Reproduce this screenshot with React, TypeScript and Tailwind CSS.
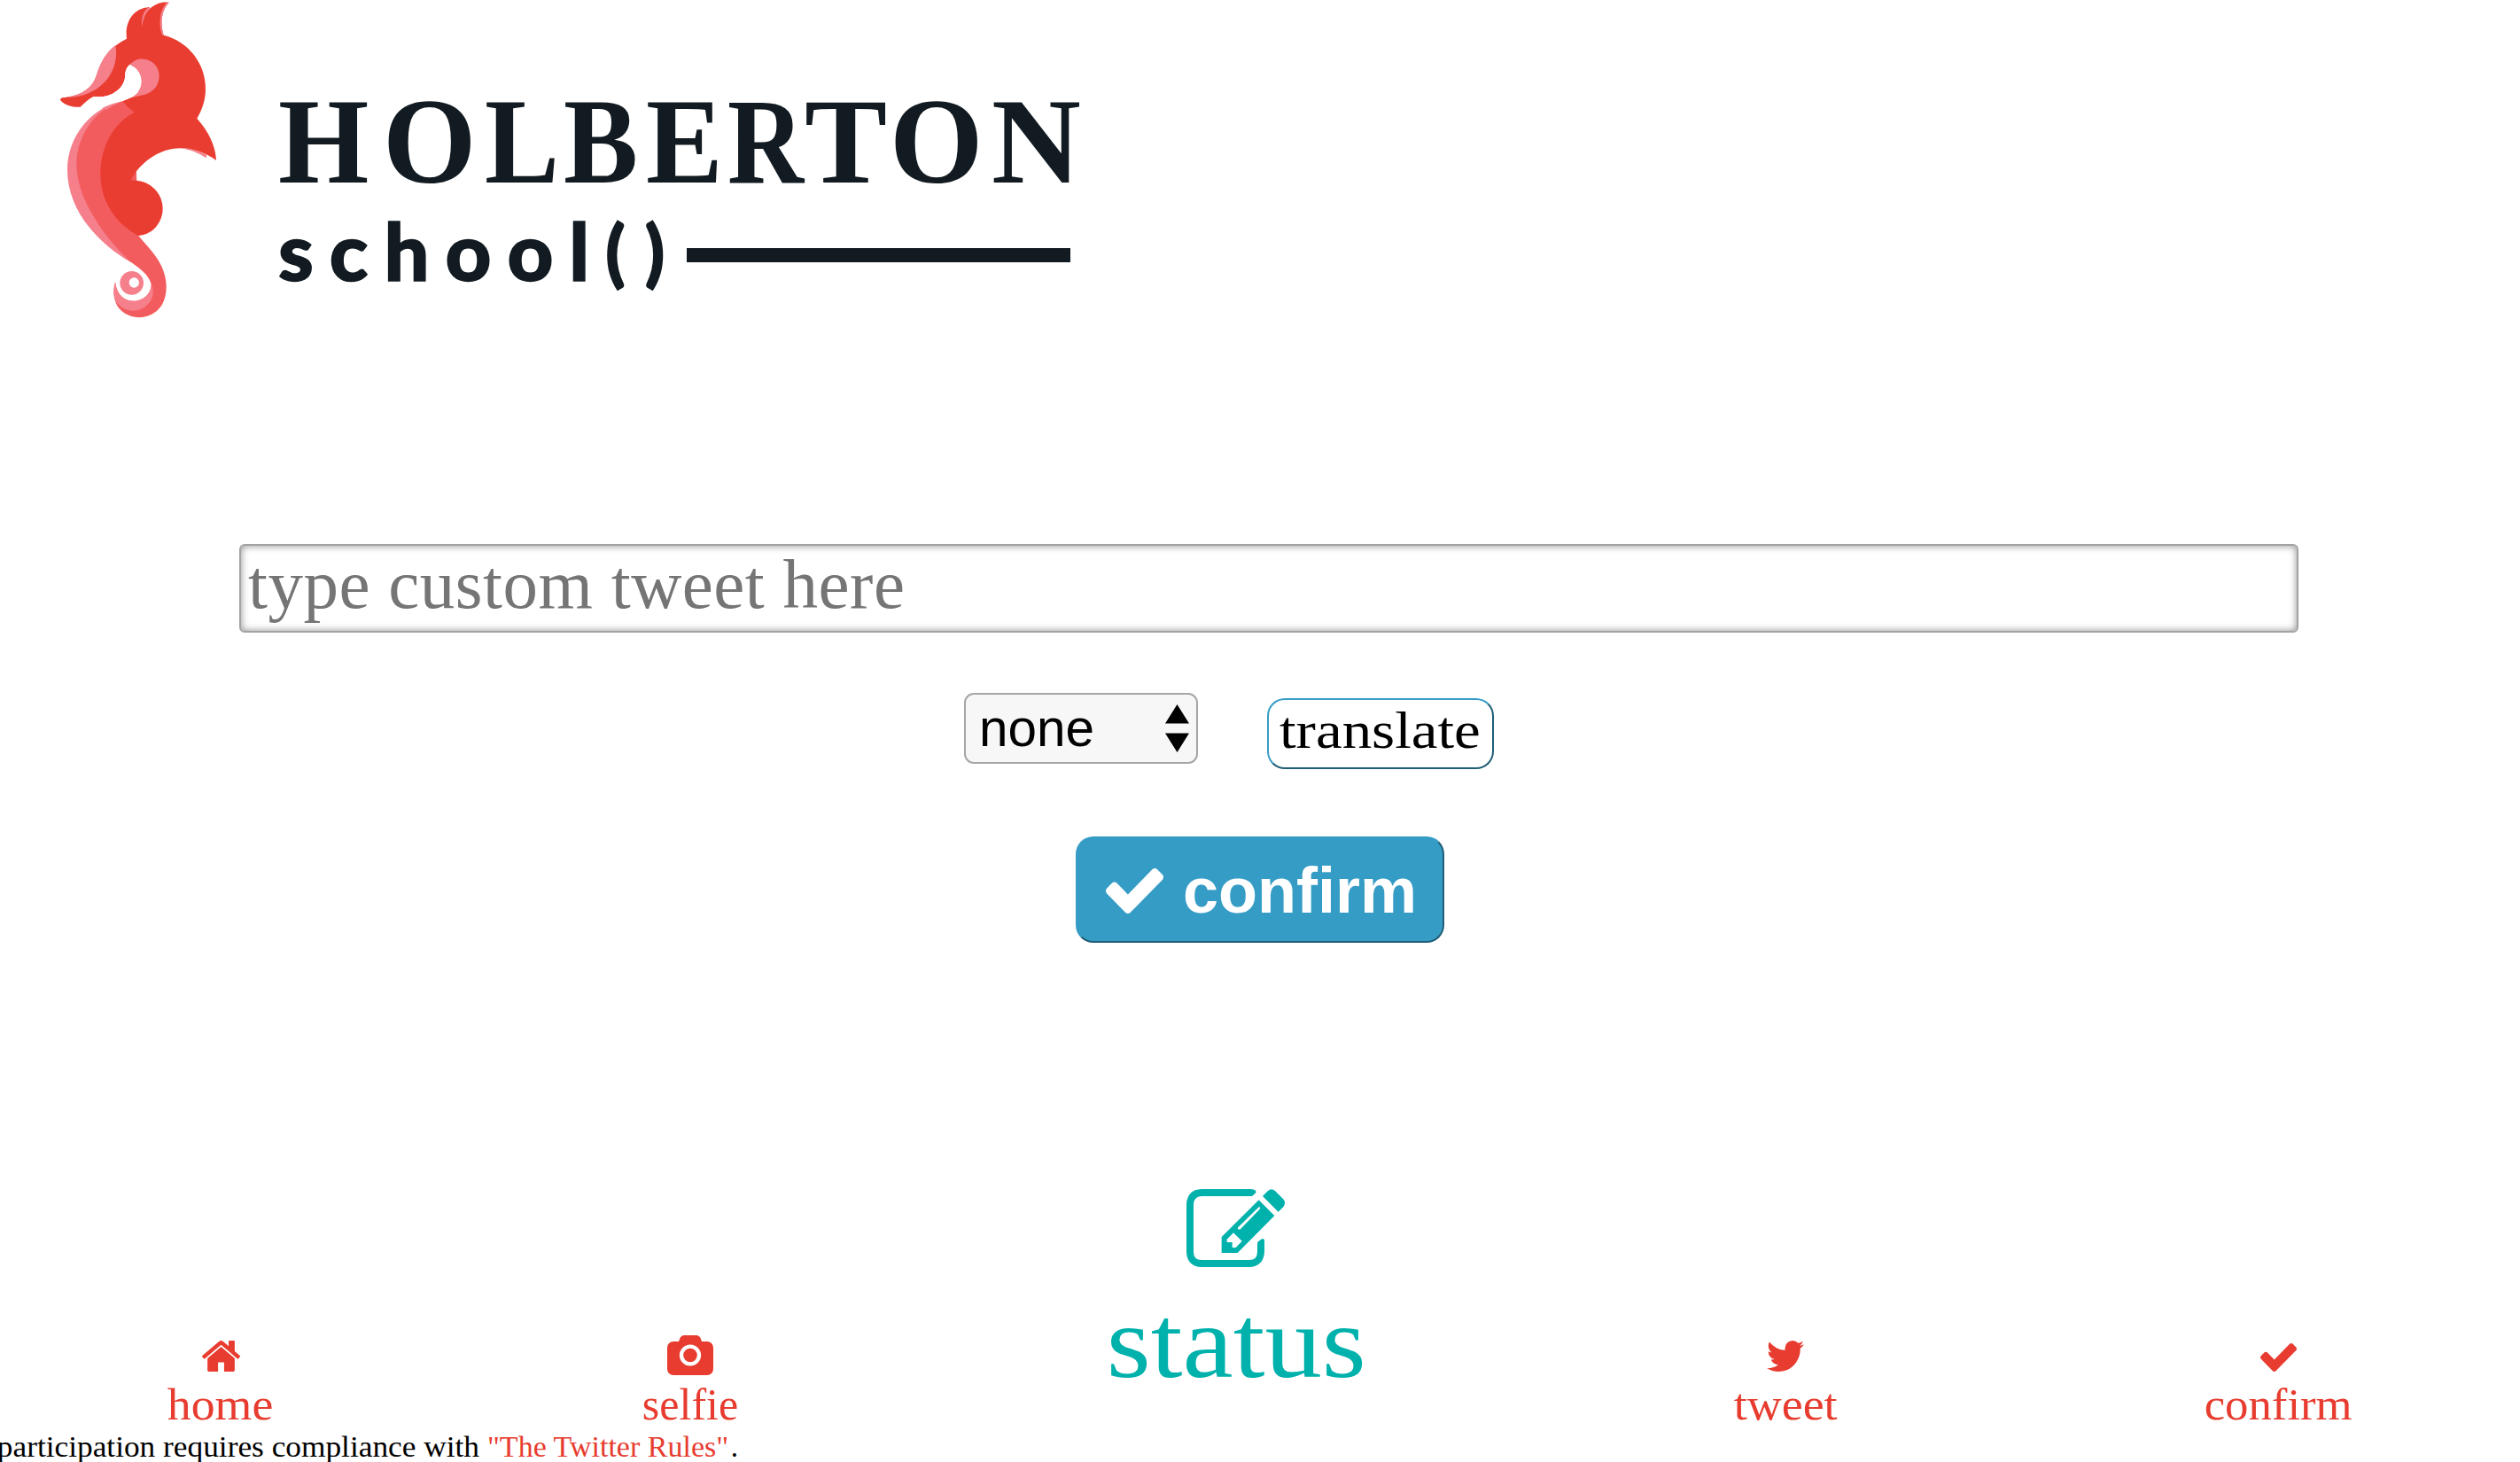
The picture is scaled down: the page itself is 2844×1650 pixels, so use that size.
import React from "react";

const serif = "font-['Palatino','Liberation_Serif',serif]";

function Seahorse() {
  return (
    <svg viewBox="0 0 720 1110" className="h-[370px] w-[240px] shrink-0" aria-hidden="true">
      <path
        fill="#f57f8b"
        d="M304 341C190 358 108 462 108 575C108 706 206 822 325 889L340 870L300 500Z"
      />
      <path
        fill="#f35c5e"
        d="M265 353L296 343L335 380L349 798C372 826 398 852 415 880C450 936 450 995 428 1033C393 1088 318 1085 284 1045C266 1024 262 990 270 955C275 997 300 1019 330 1019C365 1019 392 995 392 962C382 926 350 908 320 885C275 842 236 796 212 757C172 696 139 627 139 555C139 474 190 384 265 353Z"
      />
      <path
        fill="#f57f8b"
        d="M270 955C275 997 300 1019 330 1019C365 1019 392 995 392 962C400 975 400 999 392 1014C367 1061 304 1066 272 1021C262 1003 263 976 270 955Z"
      />
      <path
        fill="#ea3d31"
        d="M84 338C85 331 92 330 104 329C160 322 194 294 206 257C222 204 256 156 309 131C302 77 328 29 385 24L388 29C405 13 426 5 452 8C427 35 421 75 434 119C519 140 576 216 576 300C576 339 564 373 547 401C585 444 610 492 612 543C575 516 531 502 490 502C417 502 350 555 323 611C384 606 431 652 431 706C431 755 395 795 349 798C283 765 220 690 220 590C220 499 262 418 335 380Q312 365 296 343L325 331L345 260L320 218C308 228 304 240 304 257C300 300 259 329 210 328L195 328C179 335 165 351 152 362C125 365 95 354 84 338Z"
      />
      <path fill="#fff" d="M320 218C308 228 304 240 304 257C300 300 259 329 210 328L195 328L190 334L250 357L325 331C371 309 375 242 320 218Z" />
      <path fill="#f35c5e" d="M296 343L265 353L300 372L310 362Z" />
      <path fill="#f57f8b" d="M296 343C266 349 244 357 225 367L240 372L265 356Z" />
      <path fill="#ea3d31" d="M296 343L325 331L345 325L345 375L335 380Q312 365 296 343Z" />
      <path
        fill="#f57f8b"
        d="M320 218C336 203 349 199 365 200C399 202 419 228 419 257C419 289 399 311 370 320L325 331C369 309 374 242 320 218Z"
      />
      <path fill="#f57f8b" d="M104 329C160 322 194 294 206 257C218 212 240 176 271 153C278 188 270 228 250 258C219 304 164 332 104 329Z" />
      <path fill="#f57f8b" d="M361 92C357 60 366 35 385 24L388 29C370 46 364 66 361 92ZM452 8C427 35 421 75 434 119L428 117C414 70 424 28 446 8Z" />
      <path fill="#f57f8b" d="M490 502C525 501 555 512 580 525L578 535C553 518 522 506 490 502Z" />
      <circle cx="326" cy="958" r="40" fill="#f57f8b" />
      <circle cx="334" cy="957" r="17" fill="#fff" />
    </svg>
  );
}

function Check({ className }: { className: string }) {
  return (
    <svg viewBox="0 0 1550 1188" preserveAspectRatio="none" fill="currentColor" className={className} aria-hidden="true">
      <path d="M1550 232q0 40-28 68l-724 724-136 136q-28 28-68 28t-68-28l-136-136-362-362q-28-28-28-68t28-68l136-136q28-28 68-28t68 28l294 295 656-657q28-28 68-28t68 28l136 136q28 28 28 68z" />
    </svg>
  );
}

function PencilSquare() {
  return (
    <svg viewBox="357 66 333 264" className="-ml-[2px] h-[88px] w-[111px]" aria-hidden="true">
      <path
        d="M589 70Q596 76 590 80L580 89Q577 91 571 90H408Q381 92 381 119V278Q381 306 408 306H569Q597 306 597 278V250Q597 246 600 244L612 235Q620 232 621 240V278Q618 328 569 330H408Q359 328 357 278V119Q359 68 408 66H571Q583 66 589 70Z"
        fill="currentColor"
      />
      <path
        fillRule="evenodd"
        d="M602 103L655 156L530 282H476V228ZM516 214L494 236V246H512V264H524L545 242ZM602 127L533 194C527 201 534 206 541 200L605 134C608 128 606 126 602 127Z"
        fill="currentColor"
      />
      <path d="M615 90L632 73Q644 61 657 72L684 99Q696 112 685 126L668 143Z" fill="currentColor" />
    </svg>
  );
}

function Home() {
  return (
    <svg viewBox="25 253 1613 1283" preserveAspectRatio="none" fill="currentColor" className="h-[35px] w-[43px]" aria-hidden="true">
      <path d="M1408 992v480q0 26-19 45t-45 19h-384v-384h-256v384h-384q-26 0-45-19t-19-45v-480q0-1 .5-3t.5-3l575-474 575 474q1 2 1 6zm223-69l-62 74q-8 9-21 11h-3q-13 0-21-7l-692-577-692 577q-12 8-24 7-13-2-21-11l-62-74q-8-10-7-23.500t11-21.500l719-599q32-26 76-26t76 26l244 204v-195q0-14 9-23t23-9h192q14 0 23 9t9 23v408l219 182q10 8 11 21.500t-7 23.500z" />
    </svg>
  );
}

function Camera() {
  return (
    <svg viewBox="0 128 1920 1664" preserveAspectRatio="none" fill="currentColor" className="h-[45px] w-[52px]" aria-hidden="true">
      <path d="M960 672q119 0 203.500 84.500t84.500 203.500-84.500 203.500-203.500 84.500-203.500-84.500-84.500-203.500 84.500-203.500 203.500-84.500zm704-288q106 0 181 75t75 181v896q0 106-75 181t-181 75h-1408q-106 0-181-75t-75-181v-896q0-106 75-181t181-75h224l51-136q19-49 69.500-84.500t103.500-35.500h512q53 0 103.500 35.500t69.500 84.500l51 136h224zm-704 1024q185 0 316.500-131.500t131.500-316.500-131.500-316.500-316.500-131.500-316.500 131.500-131.500 316.500 131.500 316.500 316.500 131.500z" />
    </svg>
  );
}

function Bird() {
  return (
    <svg viewBox="44 256 1576 1280" preserveAspectRatio="none" fill="currentColor" className="h-[35px] w-[42px]" aria-hidden="true">
      <path d="M1620 408q-67 98-162 167 1 14 1 42 0 130-38 259.500t-115.500 248.500-184.500 210.500-258 146-323 54.500q-271 0-496-145 35 4 78 4 225 0 401-138-105-2-188-64.500t-114-159.500q33 5 61 5 43 0 85-11-112-23-185.500-111.500t-73.500-205.500v-4q68 38 146 41-66-44-105-115t-39-154q0-88 44-163 121 149 294.500 238.500t371.500 99.500q-8-38-8-74 0-134 94.500-228.500t228.500-94.500q140 0 236 102 109-21 205-78-37 115-142 178 93-10 186-50z" />
    </svg>
  );
}

const letters = [
  { c: "H", w: "w-[118px]", s: "scale-x-[0.96]" },
  { c: "O", w: "w-[115px]", s: "scale-x-[0.99]" },
  { c: "L", w: "w-[89px]", s: "scale-x-[0.92]" },
  { c: "B", w: "w-[93px]", s: "scale-x-[0.92]" },
  { c: "E", w: "w-[92px]", s: "scale-x-[0.95]" },
  { c: "R", w: "w-[87px]", s: "scale-x-[0.87]" },
  { c: "T", w: "w-[96px]", s: "scale-x-[1.02]" },
  { c: "O", w: "w-[115px]", s: "scale-x-[0.99]" },
  { c: "N", w: "w-[100px]", s: "scale-x-[1.02]" },
];

export default function App() {
  return (
    <div className={`${serif} flex h-[1650px] w-[2844px] flex-col overflow-hidden bg-white text-black`}>
      <header className="flex h-[614px] pl-10">
        <Seahorse />
        <div className="ml-[34px] flex flex-col pt-[90px] text-[#121b21]">
          <div className="flex h-[140px] text-[137px] leading-[140px] font-bold">
            {letters.map((l, i) => (
              <span key={i} className={l.w}>
                <span className={`inline-block origin-left ${l.s}`}>{l.c}</span>
              </span>
            ))}
          </div>
          <div className="flex h-[110px]">
            <span className="w-[461px] font-['Lato'] text-[90px] leading-[104px] font-black tracking-[18px] whitespace-nowrap [-webkit-text-stroke:1.5px_#121b21]">
              school<span className="relative -top-[3px] text-[81px] tracking-[22px]">()</span>
            </span>
            <span className="mt-[50px] h-4 w-[433px] bg-[#121b21]" />
          </div>
        </div>
      </header>

      <main className="flex h-[728px] flex-col">
        <input
          className="ml-[270px] h-[100px] w-[2324px] rounded-[6px] border-2 border-[#a3a3a3] bg-white px-[8px] pb-[8px] text-[79px] tracking-[0.500px] shadow-[inset_0_0_8px_rgba(0,0,0,0.45)] placeholder:text-[#757575] placeholder:opacity-100"
          placeholder="type custom tweet here"
        />
        <div className="mt-[68px] flex items-start">
          <button className="ml-[1088px] flex h-20 w-[264px] items-center justify-between rounded-[11px] border-2 border-[#a6a6a6] bg-[#f7f7f7] pr-2 pl-[15px] font-['Liberation_Sans'] text-[60px] leading-[80px]">
            <span className="origin-left scale-x-[0.975]">none</span>
            <svg viewBox="0 0 27 54" className="h-[54px] w-[27px]" aria-hidden="true">
              <path d="M13.500 0L27 21.500H0ZM13.500 54L27 32.500H0Z" />
            </svg>
          </button>
          <button className="mt-[6px] ml-[78px] flex h-20 w-[256px] rounded-[20px] border-2 border-t-[#359cc5] border-r-[#205e76] border-b-[#205e76] border-l-[#359cc5] pl-[12px] text-[59px] leading-[68px]">
            <span className="origin-left scale-x-[1.135]">translate</span>
          </button>
        </div>
        <button className="mt-[76px] ml-[1214px] flex h-[120px] w-[416px] rounded-[20px] border-2 border-t-[#359cc5] border-r-[#205e76] border-b-[#205e76] border-l-[#359cc5] bg-[#359cc5] pl-8 font-['Liberation_Sans'] text-[72px] leading-[118px] font-bold text-white">
          <Check className="mt-[34px] h-[51px] w-[65px]" />
          <span className="ml-[22px]">confirm</span>
        </button>
      </main>

      <nav className="flex h-[274px] text-[50px] leading-[60px] text-[#e73c2f]">
        <a className="mt-[171px] ml-[149px] flex w-[200px] flex-col items-center">
          <Home />
          <span className="mt-[7px] scale-x-[1.075]">home</span>
        </a>
        <a className="mt-[165px] ml-[330px] flex w-[200px] flex-col items-center">
          <Camera />
          <span className="mt-[3px]">selfie</span>
        </a>
        <a className="ml-[356px] flex w-[320px] flex-col items-center text-[#00b1ac]">
          <PencilSquare />
          <span className="mt-[20px] text-[117px] leading-[130px] scale-x-[1.100]">status</span>
        </a>
        <a className="mt-[171px] ml-[360px] flex w-[200px] flex-col items-center">
          <Bird />
          <span className="mt-[7px] scale-x-[1.080]">tweet</span>
        </a>
        <a className="mt-[174px] ml-[356px] flex w-[200px] flex-col items-center">
          <Check className="h-[32px] w-[41px]" />
          <span className="mt-[7px] scale-x-[1.055]">confirm</span>
        </a>
      </nav>

      <footer className="flex h-[34px] w-[833px] justify-end text-[33px] leading-[34px] whitespace-pre">
        <span className="origin-right scale-x-[1.070]">participation requires compliance with </span>
        <span className="w-[275px]">
          <span className="inline-block origin-left scale-x-[1.030] text-[#e73c2f]">"The Twitter Rules"</span>
        </span>
        <span>.</span>
      </footer>
    </div>
  );
}
